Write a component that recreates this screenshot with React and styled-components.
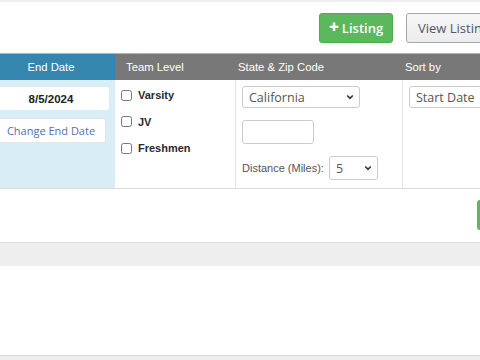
import React from "react";
import styled, { createGlobalStyle } from "styled-components";

const GlobalStyle = createGlobalStyle`
  html, body {
    margin: 0;
    padding: 0;
    background: #fff;
    overflow: hidden;
  }
`;

const Chevron = () => (
  <svg width="8" height="6" viewBox="0 0 8 6">
    <path d="M1.2 1.5 L4 4.3 L6.8 1.5" fill="none" stroke="#333" strokeWidth="1.6" />
  </svg>
);

export default function App() {
  const levels = ["Varsity", "JV", "Freshmen"];

  return (
    <Page>
      <GlobalStyle />
      <TopBand />
      <Toolbar>
        <GreenButton>
          <Plus>+</Plus>Listing
        </GreenButton>
        <DefaultButton>View Listings</DefaultButton>
      </Toolbar>

      <Table>
        <HeadCell $blue $center>End Date</HeadCell>
        <HeadCell $pad={11}>Team Level</HeadCell>
        <HeadCell $pad={3}>State &amp; Zip Code</HeadCell>
        <HeadCell $pad={3}>Sort by</HeadCell>

        <DateCell>
          <DateBox>8/5/2024</DateBox>
          <LinkButton>Change End Date</LinkButton>
        </DateCell>

        <Cell>
          {levels.map((level) => (
            <CheckRow key={level}>
              <Check type="checkbox" />
              <CheckLabel>{level}</CheckLabel>
            </CheckRow>
          ))}
        </Cell>

        <Cell $border>
          <SelectWrap $width={118}>
            <Select defaultValue="California">
              <option>California</option>
            </Select>
            <Arrow>
              <Chevron />
            </Arrow>
          </SelectWrap>
          <ZipInput />
          <DistanceRow>
            <DistanceLabel>Distance (Miles):</DistanceLabel>
            <SelectWrap $width={49} $height={24}>
              <Select defaultValue="5">
                <option>5</option>
              </Select>
              <Arrow>
                <Chevron />
              </Arrow>
            </SelectWrap>
          </DistanceRow>
        </Cell>

        <Cell $border>
          <SelectWrap $width={130}>
            <Select defaultValue="Start Date">
              <option>Start Date</option>
            </Select>
            <Arrow>
              <Chevron />
            </Arrow>
          </SelectWrap>
        </Cell>
      </Table>

      <ActionRow>
        <SmallGreen />
      </ActionRow>

      <GreyBand />
      <Results />
      <GreyBand $short />
    </Page>
  );
}

const Page = styled.div`
  width: 600px;
  margin-left: -13px;
  font-family: "Liberation Sans", Arial, sans-serif;
`;

const TopBand = styled.div`
  height: 2px;
  background: #eeeeee;
`;

const Toolbar = styled.div`
  height: 51px;
  display: flex;
  align-items: center;
  gap: 13px;
  padding-left: 332px;
  box-sizing: border-box;
`;

const GreenButton = styled.button`
  height: 30px;
  width: 74px;
  box-sizing: border-box;
  display: flex;
  align-items: center;
  justify-content: center;
  gap: 3px;
  background: #5cb85c;
  border: 1px solid #4cae4c;
  border-radius: 3px;
  color: #fff;
  font-family: "Open Sans", sans-serif;
  font-size: 13px;
  font-weight: 600;
  padding: 0;
`;

const Plus = styled.span`
  font-size: 17px;
  font-weight: 800;
  line-height: 1;
  margin-top: -2px;
`;

const DefaultButton = styled.button`
  height: 30px;
  box-sizing: border-box;
  padding: 0 11px;
  background: linear-gradient(#f7f7f7, #ececec);
  border: 1px solid #9fa8b5;
  border-radius: 3px;
  color: #4f5868;
  font-family: "Open Sans", sans-serif;
  font-size: 13px;
  white-space: nowrap;
`;

const Table = styled.div`
  display: grid;
  grid-template-columns: 128px 120px 167px 185px;
  border-top: 1px solid #b5b5b5;
  border-bottom: 1px solid #dcdcdc;
`;

const HeadCell = styled.div`
  height: 26px;
  display: flex;
  align-items: center;
  justify-content: ${(p) => (p.$center ? "center" : "flex-start")};
  padding-left: ${(p) => p.$pad || 0}px;
  background: ${(p) => (p.$blue ? "#3486ae" : "#787878")};
  color: #fff;
  font-size: 11.3px;
`;

const DateCell = styled.div`
  height: 108px;
  background: #d9edf7;
  display: flex;
  flex-direction: column;
  align-items: center;
  padding-top: 7px;
  box-sizing: border-box;
  gap: 8px;
`;

const DateBox = styled.div`
  width: 116px;
  height: 23px;
  background: #fff;
  border-radius: 3px;
  display: flex;
  align-items: center;
  justify-content: center;
  font-size: 11.5px;
  font-weight: 700;
  color: #222;
`;

const LinkButton = styled.button`
  width: 110px;
  height: 25px;
  background: #fff;
  border: 1px solid #e3e3e3;
  border-radius: 3px;
  color: #5470b3;
  font-family: "Open Sans", sans-serif;
  font-size: 11px;
  padding: 0;
`;

const Cell = styled.div`
  height: 108px;
  box-sizing: border-box;
  padding: 6px 6px 0;
  border-left: ${(p) => (p.$border ? "1px solid #e6e6e6" : "none")};
  display: flex;
  flex-direction: column;
  align-items: flex-start;
`;

const CheckRow = styled.label`
  height: 26.5px;
  display: flex;
  align-items: center;
  gap: 6px;
  &:first-child {
    margin-top: -4px;
  }
`;

const Check = styled.input`
  width: 11px;
  height: 11px;
  margin: 0;
`;

const CheckLabel = styled.span`
  font-size: 11px;
  font-weight: 700;
  color: #2a2a2a;
`;

const SelectWrap = styled.div`
  position: relative;
  width: ${(p) => p.$width}px;
  height: ${(p) => p.$height || 22}px;
`;

const Select = styled.select`
  appearance: none;
  width: 100%;
  height: 100%;
  box-sizing: border-box;
  border: 1px solid #cccccc;
  border-radius: 3px;
  background: #fff;
  padding: 0 0 0 6px;
  color: #555;
  font-family: "Open Sans", sans-serif;
  font-size: 12.5px;
`;

const Arrow = styled.span`
  position: absolute;
  right: 6px;
  top: 50%;
  margin-top: -3px;
  display: flex;
  pointer-events: none;
`;

const ZipInput = styled.input`
  width: 72px;
  height: 24px;
  box-sizing: border-box;
  margin: 12px 0 0;
  border: 1px solid #cccccc;
  border-radius: 3px;
`;

const DistanceRow = styled.div`
  margin-top: 12px;
  display: flex;
  align-items: center;
  gap: 5px;
`;

const DistanceLabel = styled.span`
  font-size: 11px;
  color: #555;
`;

const ActionRow = styled.div`
  height: 53px;
  display: flex;
  align-items: flex-start;
  padding: 11px 0 0 490px;
  box-sizing: border-box;
`;

const SmallGreen = styled.div`
  width: 40px;
  height: 30px;
  background: #5cb85c;
  border-radius: 3px;
`;

const GreyBand = styled.div`
  height: ${(p) => (p.$short ? "5px" : "23px")};
  background: #eeeeee;
  border-top: 1px solid #dddddd;
`;

const Results = styled.div`
  height: 89px;
  background: #fff;
`;
